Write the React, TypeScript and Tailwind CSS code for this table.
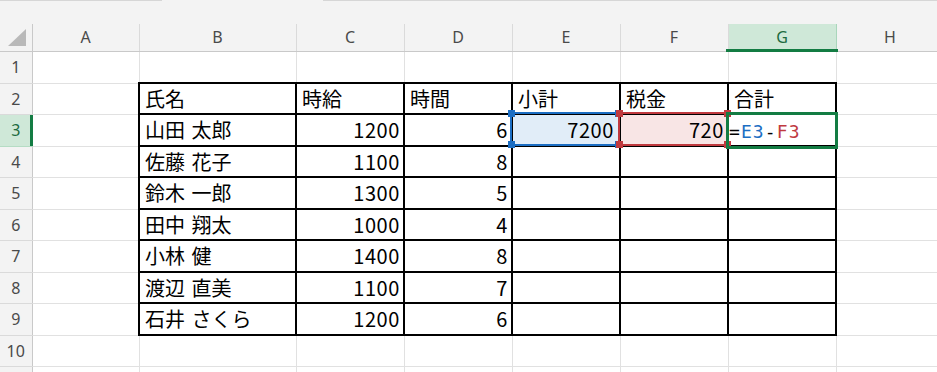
import React from "react";

const COL_LETTERS = ["A", "B", "C", "D", "E", "F", "G", "H"];
const COL_WIDTHS = [32, 107, 157, 108, 108, 108, 108, 108, 108];
const ROW_HEIGHTS = [32, 31, 32, 31, 32, 31, 32, 31, 32, 31, 24];

type Person = { name: string; wage: number; hours: number };

const PEOPLE: Person[] = [
  { name: "山田 太郎", wage: 1200, hours: 6 },
  { name: "佐藤 花子", wage: 1100, hours: 8 },
  { name: "鈴木 一郎", wage: 1300, hours: 5 },
  { name: "田中 翔太", wage: 1000, hours: 4 },
  { name: "小林 健", wage: 1400, hours: 8 },
  { name: "渡辺 直美", wage: 1100, hours: 7 },
  { name: "石井 さくら", wage: 1200, hours: 6 },
];

const HEADINGS = ["氏名", "時給", "時間", "小計", "税金", "合計"];

function Handles({ color }: { color: "blue" | "red" }) {
  const c = color === "blue" ? "bg-[#1c6ec3]" : "bg-[#c03a3f]";
  return (
    <>
      <span className={`absolute -left-[4px] -top-[4px] w-[7px] h-[7px] z-30 ${c}`} />
      <span className={`absolute -right-[4px] -top-[4px] w-[7px] h-[7px] z-30 ${c}`} />
      <span className={`absolute -left-[4px] -bottom-[4px] w-[7px] h-[7px] z-30 ${c}`} />
      <span className={`absolute -right-[4px] -bottom-[4px] w-[7px] h-[7px] z-30 ${c}`} />
    </>
  );
}

function Cell({ row, col }: { row: number; col: number }) {
  // col: 0 = A ... 7 = H
  const inTable = row >= 2 && row <= 9 && col >= 1 && col <= 6;
  const border = inTable ? "border-2 border-black" : "border border-[#e1e1e1]";
  const base = `p-0 relative ${border}`;

  if (!inTable) return <td className={base} />;

  if (row === 2) {
    return (
      <td className={`${base} text-left pl-[5px]`}>
        {HEADINGS[col - 1]}
      </td>
    );
  }

  const p = PEOPLE[row - 3];
  if (col === 1) {
    return (
      <td className={`${base} text-left pl-[5px] [word-spacing:2px]`}>{p.name}</td>
    );
  }
  if (col === 2) {
    return <td className={`${base} text-right pr-[3px] tracking-[0.6px]`}>{p.wage}</td>;
  }
  if (col === 3) {
    return <td className={`${base} text-right pr-[3px] tracking-[0.6px]`}>{p.hours}</td>;
  }
  if (row === 3 && col === 4) {
    return (
      <td className={`${base} text-right pr-[5px] tracking-[0.6px] bg-[#e1edf8]`}>
        7200
        <div className="absolute -left-[3px] -top-[3px] -right-[1px] -bottom-[1px] border-2 border-[#1c6ec3] z-10">
          <Handles color="blue" />
        </div>
      </td>
    );
  }
  if (row === 3 && col === 5) {
    return (
      <td className={`${base} text-right pr-[3px] tracking-[0.6px] bg-[#f8e5e5]`}>
        720
        <div className="absolute -left-[3px] -top-[3px] -right-[2px] -bottom-[1px] border-2 border-[#c03a3f] z-10">
          <Handles color="red" />
        </div>
      </td>
    );
  }
  if (row === 3 && col === 6) {
    return (
      <td className={`${base} text-left pl-0`}>
        <span className="font-['DejaVu_Sans_Mono',monospace] text-[18px] tracking-[1.1px]">
          <span className="text-black">=</span>
          <span className="text-[#1c6ec3]">E3</span>
          <span className="text-black">-</span>
          <span className="text-[#c03a3f]">F3</span>
        </span>
        <div className="absolute -left-[3px] -top-[3px] -right-[3px] -bottom-[4px] border-[3px] border-[#137c43] z-20" />
      </td>
    );
  }
  return <td className={base} />;
}

export default function App() {
  const tableWidth = COL_WIDTHS.reduce((a, b) => a + b, 0);
  return (
    <div className="w-[937px] h-[372px] overflow-hidden bg-white font-['Noto_Sans_CJK_JP',sans-serif] text-[20px] text-black">
      {/* strip above the column headings */}
      <div className="h-[24px] bg-[#f3f3f3] flex items-start">
        <div className="w-[162px] h-px bg-[#d6d6d6]" />
        <div className="w-[161px]" />
        <div className="flex-1 h-px bg-[#d6d6d6]" />
      </div>

      <table className="border-collapse table-fixed leading-none" style={{ width: tableWidth }}>
        <colgroup>
          {COL_WIDTHS.map((w, i) => (
            <col key={i} style={{ width: w }} />
          ))}
        </colgroup>
        <thead>
          <tr className="h-[27px]">
            <th className="p-0 bg-[#f3f3f3] border-b border-r border-[#c9c9c9] relative">
              <svg width="31" height="26" viewBox="0 0 31 26" className="block">
                <polygon points="26,5 26,22 8,22" fill="#b9b9b9" />
              </svg>
            </th>
            {COL_LETTERS.map((l) =>
              l === "G" ? (
                <th
                  key={l}
                  className="p-0 relative bg-[#cfe8d8] border-x border-[#a9d6bb] border-b border-b-[#c9c9c9] font-['Noto_Sans',sans-serif] font-normal text-[16px] text-[#1d6b3f]"
                >
                  G
                  <div className="absolute -left-[3px] -right-[2px] -bottom-[1px] h-[3px] bg-[#137c43]" />
                </th>
              ) : (
                <th
                  key={l}
                  className="p-0 bg-[#f3f3f3] border-x border-[#dadada] border-b border-b-[#c9c9c9] font-['Noto_Sans',sans-serif] font-normal text-[16px] text-[#4a4a4a]"
                >
                  {l}
                </th>
              )
            )}
          </tr>
        </thead>
        <tbody>
          {ROW_HEIGHTS.map((h, i) => {
            const row = i + 1;
            const active = row === 3;
            // the last row only peeks in at the bottom edge, so its number stays hidden
            const label = row <= 10 ? row : "";
            return (
              <tr key={row} style={{ height: h }}>
                <th
                  className={`p-0 relative border-b border-r font-['Noto_Sans',sans-serif] font-normal text-[16px] ${
                    active
                      ? "bg-[#cfe8d8] border-[#b5dcc4] border-r-[#c9c9c9] text-[#1d6b3f]"
                      : "bg-[#f3f3f3] border-[#dadada] border-r-[#c9c9c9] text-[#4a4a4a]"
                  }`}
                >
                  {label}
                  {active && (
                    <div className="absolute -right-[1px] top-0 bottom-0 w-[3px] bg-[#137c43]" />
                  )}
                </th>
                {COL_LETTERS.map((_, c) => (
                  <Cell key={c} row={row} col={c} />
                ))}
              </tr>
            );
          })}
        </tbody>
      </table>
    </div>
  );
}
